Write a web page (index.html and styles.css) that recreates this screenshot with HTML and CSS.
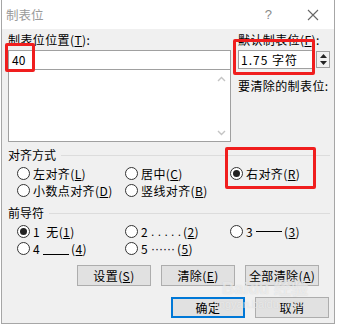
FILE: index.html
```html
<!DOCTYPE html>
<html lang="zh-CN">
<head>
  <meta charset="UTF-8" />
  <title>制表位</title>
  <link rel="stylesheet" href="styles.css">
</head>
<body>
  <div class="dialog">
    <div class="titlebar">
      <span class="title">制表位</span>
      <span class="help">?</span>
      <svg class="close" width="12" height="12" viewBox="0 0 12 12">
        <path d="M1 1 L11 11 M11 1 L1 11" stroke="#666" stroke-width="1.1" fill="none" />
      </svg>
    </div>

    <div class="content">
      <div class="top">
        <div class="pos-col">
          <div class="label">制表位位置(<u>T</u>):</div>
          <div class="pos-box">
            <div class="pos-input">40</div>
            <div class="pos-list">
              <div class="scroll">
                <svg width="9" height="6" viewBox="0 0 9 6"><path d="M1 5 L4.5 1.5 L8 5" stroke="#c4c4c4" stroke-width="1.4" fill="none" /></svg>
                <svg width="9" height="6" viewBox="0 0 9 6"><path d="M1 1 L4.5 4.5 L8 1" stroke="#c4c4c4" stroke-width="1.4" fill="none" /></svg>
              </div>
            </div>
          </div>
        </div>
        <div class="def-col">
          <div class="label">默认制表位(<u>F</u>):</div>
          <div class="spin">
            <div class="spin-input">1.75 字符</div>
            <div class="spin-btns">
              <svg width="7" height="4" viewBox="0 0 7 4"><path d="M0 4 L3.5 0 L7 4 Z" fill="#222" /></svg>
              <svg width="7" height="4" viewBox="0 0 7 4"><path d="M0 0 L3.5 4 L7 0 Z" fill="#222" /></svg>
            </div>
          </div>
          <div class="label clear-label">要清除的制表位:</div>
        </div>
      </div>

      <div class="group-head"><span>对齐方式</span><span class="rule"></span></div>
      <div class="radios">
        <div class="radio"><span class="dot"></span>左对齐(<u>L</u>)</div>
        <div class="radio"><span class="dot"></span>居中(<u>C</u>)</div>
        <div class="radio"><span class="dot checked"></span>右对齐(<u>R</u>)</div>
        <div class="radio"><span class="dot"></span>小数点对齐(<u>D</u>)</div>
        <div class="radio"><span class="dot"></span>竖线对齐(<u>B</u>)</div>
        <div></div>
      </div>

      <div class="group-head lead-head"><span>前导符</span><span class="rule"></span></div>
      <div class="radios">
        <div class="radio"><span class="dot checked"></span>1&nbsp; 无(<u>1</u>)</div>
        <div class="radio"><span class="dot"></span>2 <span class="lead">. . . . .</span>(<u>2</u>)</div>
        <div class="radio"><span class="dot"></span>3 <span class="lead line">&nbsp;</span>(<u>3</u>)</div>
        <div class="radio"><span class="dot"></span>4 <span class="lead under">&nbsp;</span>(<u>4</u>)</div>
        <div class="radio"><span class="dot"></span>5 <span class="lead">······</span>(<u>5</u>)</div>
        <div></div>
      </div>

      <div class="btn-row first">
        <div class="btn">设置(<u>S</u>)</div>
        <div class="btn">清除(<u>E</u>)</div>
        <div class="btn">全部清除(<u>A</u>)</div>
      </div>
      <div class="btn-row second">
        <div class="btn default">确定</div>
        <div class="btn">取消</div>
      </div>
    </div>
  </div>

  <div class="mark mark-pos"></div>
  <div class="mark mark-def"></div>
  <div class="mark mark-right"></div>

  <div class="watermark">
    <div class="wm-logo">Bai<b>du</b> 经验</div>
    <div class="wm-url">jingyan.baidu.com</div>
  </div>
</body>
</html>
```

FILE: styles.css
```css
body {
  margin: 0;
  background: #fff;
  font-family: "Noto Sans CJK SC", "Liberation Sans", sans-serif;
  font-size: 12px;
  color: #000;
  width: 338px;
  height: 325px;
  overflow: hidden;
  position: relative;
}
u {
  text-decoration: underline;
  text-underline-offset: 1px;
}
.dialog {
  margin-left: 1px;
  width: 332px;
  height: 323px;
  border: 1px solid #a6a6a6;
  border-top: none;
  background: #f0f0f0;
}
.titlebar {
  height: 29px;
  background: #fff;
  display: flex;
  align-items: center;
  padding-left: 4px;
}
.title {
  color: #9a9a9a;
  font-size: 12.5px;
  flex: 1;
  padding-bottom: 1px;
}
.help {
  color: #8a8a8a;
  font-family: "Liberation Sans", sans-serif;
  font-size: 13px;
  margin-right: 35px;
}
.close {
  margin-right: 15px;
}
.content {
  padding: 4px 0 0 6px;
}
.top {
  display: flex;
}
.label {
  line-height: 14px;
  height: 14px;
  white-space: nowrap;
  letter-spacing: 0.4px;
}
.pos-col {
  width: 223px;
}
.pos-box {
  margin-top: 3px;
  border: 1px solid #a0a0a0;
  height: 90px;
  background: #fff;
  display: flex;
  flex-direction: column;
}
.pos-input {
  height: 18px;
  line-height: 18px;
  padding-left: 3px;
  border-bottom: 1px solid #a0a0a0;
}
.pos-list {
  flex: 1;
  display: flex;
  justify-content: flex-end;
}
.scroll {
  width: 17px;
  display: flex;
  flex-direction: column;
  justify-content: space-between;
  align-items: center;
  padding: 6px 0 5px;
}
.def-col {
  margin-left: 7px;
}
.spin {
  margin-top: 3px;
  display: flex;
  height: 19px;
}
.spin-input {
  width: 73px;
  background: #fff;
  border: 1px solid #a0a0a0;
  line-height: 17px;
  padding-left: 2px;
  letter-spacing: 1px;
}
.spin-btns {
  width: 12px;
  margin: 1px 0 1px 1px;
  border: 1px solid #a0a0a0;
  background: #f0f0f0;
  display: flex;
  flex-direction: column;
  justify-content: space-around;
  align-items: center;
}
.clear-label {
  margin-top: 10px;
}
.group-head {
  margin-top: 6px;
  display: flex;
  align-items: center;
  line-height: 14px;
  height: 14px;
  padding-right: 4px;
}
.lead-head {
  margin-top: 7px;
}
.rule {
  flex: 1;
  margin-left: 5px;
  border-top: 1px solid #dcdcdc;
}
.radios {
  margin-top: 3px;
  padding-left: 9px;
  display: grid;
  grid-template-columns: 108px 105px auto;
  grid-auto-rows: 17px;
}
.radio {
  display: flex;
  align-items: center;
  white-space: nowrap;
  letter-spacing: 0.4px;
}
.dot {
  flex-shrink: 0;
  box-sizing: border-box;
  width: 13px;
  height: 13px;
  border: 1px solid #333;
  border-radius: 50%;
  background: #fff;
  margin-right: 3px;
  display: flex;
  align-items: center;
  justify-content: center;
}
.dot.checked::after {
  content: "";
  width: 7px;
  height: 7px;
  border-radius: 50%;
  background: #222;
}
.lead {
  font-family: "Liberation Sans", sans-serif;
  letter-spacing: 0;
  margin: 0 2px 0 3px;
}
.lead.line {
  display: inline-block;
  width: 26px;
  height: 1px;
  background: #000;
  margin-bottom: 1px;
}
.lead.under {
  display: inline-block;
  width: 26px;
  height: 1px;
  background: #000;
  margin-top: 11px;
}
.btn-row {
  display: flex;
  gap: 10px;
}
.btn-row.first {
  margin-top: 8px;
  padding-left: 69px;
}
.btn-row.second {
  margin-top: 11px;
  padding-left: 163px;
}
.btn {
  width: 72px;
  height: 19px;
  line-height: 19px;
  text-align: center;
  background: #e1e1e1;
  border: 1px solid #adadad;
  letter-spacing: 0.4px;
}
.btn.default {
  border: 2px solid #0078d7;
  width: 70px;
  height: 17px;
  line-height: 17px;
}
.mark {
  position: absolute;
  border: 3px solid #f01e1e;
  border-radius: 2px;
}
.mark-pos {
  left: 5px;
  top: 43px;
  width: 24px;
  height: 23px;
}
.mark-def {
  left: 233px;
  top: 39px;
  width: 76px;
  height: 30px;
}
.mark-right {
  left: 225px;
  top: 147px;
  width: 85px;
  height: 36px;
}
.watermark {
  position: absolute;
  left: 222px;
  top: 280px;
  color: rgba(255, 255, 255, 0.55);
  text-shadow: 0 0 1px rgba(150, 150, 150, 0.35);
  pointer-events: none;
}
.wm-logo {
  font-family: "Liberation Sans", sans-serif;
  font-size: 17px;
  font-weight: bold;
  line-height: 18px;
}
.wm-url {
  font-family: "Liberation Sans", sans-serif;
  font-size: 11px;
  margin-left: -8px;
  line-height: 12px;
}
```
